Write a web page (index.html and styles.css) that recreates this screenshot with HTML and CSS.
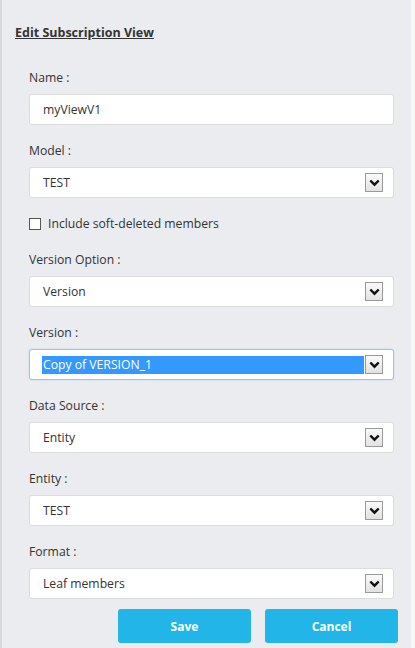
FILE: index.html
```html
<!DOCTYPE html>
<html>
<head>
<meta charset="utf-8">
<link rel="stylesheet" href="styles.css">
</head>
<body>
<div class="page">
  <h1 class="title">Edit Subscription View</h1>
  <div class="form">
    <div class="group">
      <div class="label">Name :</div>
      <div class="field"><span class="value">myViewV1</span></div>
    </div>
    <div class="group">
      <div class="label">Model :</div>
      <div class="field select"><span class="value">TEST</span><span class="arrow"><svg width="11" height="8" viewBox="0 0 11 8"><path d="M1.3 1.5 L5.5 5.7 L9.7 1.5" fill="none" stroke="#111" stroke-width="2.4"/></svg></span></div>
    </div>
    <div class="check-row">
      <span class="checkbox"></span>
      <span class="check-label">Include soft-deleted members</span>
    </div>
    <div class="group">
      <div class="label">Version Option :</div>
      <div class="field select"><span class="value">Version</span><span class="arrow"><svg width="11" height="8" viewBox="0 0 11 8"><path d="M1.3 1.5 L5.5 5.7 L9.7 1.5" fill="none" stroke="#111" stroke-width="2.4"/></svg></span></div>
    </div>
    <div class="group">
      <div class="label">Version :</div>
      <div class="field select focused"><span class="value selected">Copy of VERSION_1</span><span class="arrow"><svg width="11" height="8" viewBox="0 0 11 8"><path d="M1.3 1.5 L5.5 5.7 L9.7 1.5" fill="none" stroke="#111" stroke-width="2.4"/></svg></span></div>
    </div>
    <div class="group">
      <div class="label">Data Source :</div>
      <div class="field select"><span class="value">Entity</span><span class="arrow"><svg width="11" height="8" viewBox="0 0 11 8"><path d="M1.3 1.5 L5.5 5.7 L9.7 1.5" fill="none" stroke="#111" stroke-width="2.4"/></svg></span></div>
    </div>
    <div class="group">
      <div class="label">Entity :</div>
      <div class="field select"><span class="value">TEST</span><span class="arrow"><svg width="11" height="8" viewBox="0 0 11 8"><path d="M1.3 1.5 L5.5 5.7 L9.7 1.5" fill="none" stroke="#111" stroke-width="2.4"/></svg></span></div>
    </div>
    <div class="group last">
      <div class="label">Format :</div>
      <div class="field select"><span class="value">Leaf members</span><span class="arrow"><svg width="11" height="8" viewBox="0 0 11 8"><path d="M1.3 1.5 L5.5 5.7 L9.7 1.5" fill="none" stroke="#111" stroke-width="2.4"/></svg></span></div>
    </div>
    <div class="buttons">
      <button class="btn">Save</button>
      <button class="btn">Cancel</button>
    </div>
  </div>
</div>
</body>
</html>
```
FILE: styles.css
```css
html, body {
  margin: 0;
  padding: 0;
}
body {
  background: #f7f7f8;
  font-family: "Open Sans", "Noto Sans", sans-serif;
  color: #333;
}
.page {
  width: 411px;
  height: 648px;
  box-sizing: border-box;
  background: #ebecef;
  border-left: 2px solid #d6d8db;
  padding: 24px 0 0 13px;
}
.title {
  margin: 0;
  font-size: 12.5px;
  font-weight: 700;
  line-height: 17px;
  text-decoration: underline;
  color: #333;
}
.form {
  padding: 28px 0 0 14px;
  width: 365px;
}
.group {
  display: flex;
  flex-direction: column;
  margin-bottom: 17px;
}
.group.last {
  margin-bottom: 10px;
}
.label {
  font-size: 12.2px;
  line-height: 17px;
  height: 17px;
  margin-bottom: 8px;
  color: #333;
}
.field {
  height: 31px;
  box-sizing: border-box;
  background: #fff;
  border: 1px solid #dcdcdc;
  border-radius: 3px;
  display: flex;
  align-items: center;
  padding: 0 10px 0 12px;
  font-size: 12.2px;
}
.value {
  flex: 1;
  line-height: 18px;
  padding-left: 1px;
  color: #333;
}
.value.selected {
  background: #3399ff;
  color: #fff;
  margin-right: 1px;
}
.focused {
  border-color: #9cc3ea;
  box-shadow: 0 0 2px #b8d6f2;
}
.arrow {
  width: 18px;
  height: 19px;
  box-sizing: border-box;
  border: 1px solid #9a9a9a;
  background: linear-gradient(#fafafa, #e2e2e2);
  display: flex;
  align-items: center;
  justify-content: center;
}
.check-row {
  display: flex;
  align-items: center;
  height: 17px;
  margin-bottom: 19px;
}
.checkbox {
  width: 12px;
  height: 12px;
  box-sizing: border-box;
  border: 1px solid #555;
  background: #fff;
  margin-right: 7px;
}
.check-label {
  font-size: 12.2px;
  line-height: 17px;
  color: #333;
}
.buttons {
  display: flex;
  justify-content: flex-end;
  gap: 14px;
  width: 369px;
}
.btn {
  width: 133px;
  height: 34px;
  border: none;
  border-radius: 3px;
  background: #22b5e8;
  color: #fff;
  font-family: "Open Sans", "Noto Sans", sans-serif;
  font-weight: 700;
  font-size: 12px;
  padding: 0;
}
```
